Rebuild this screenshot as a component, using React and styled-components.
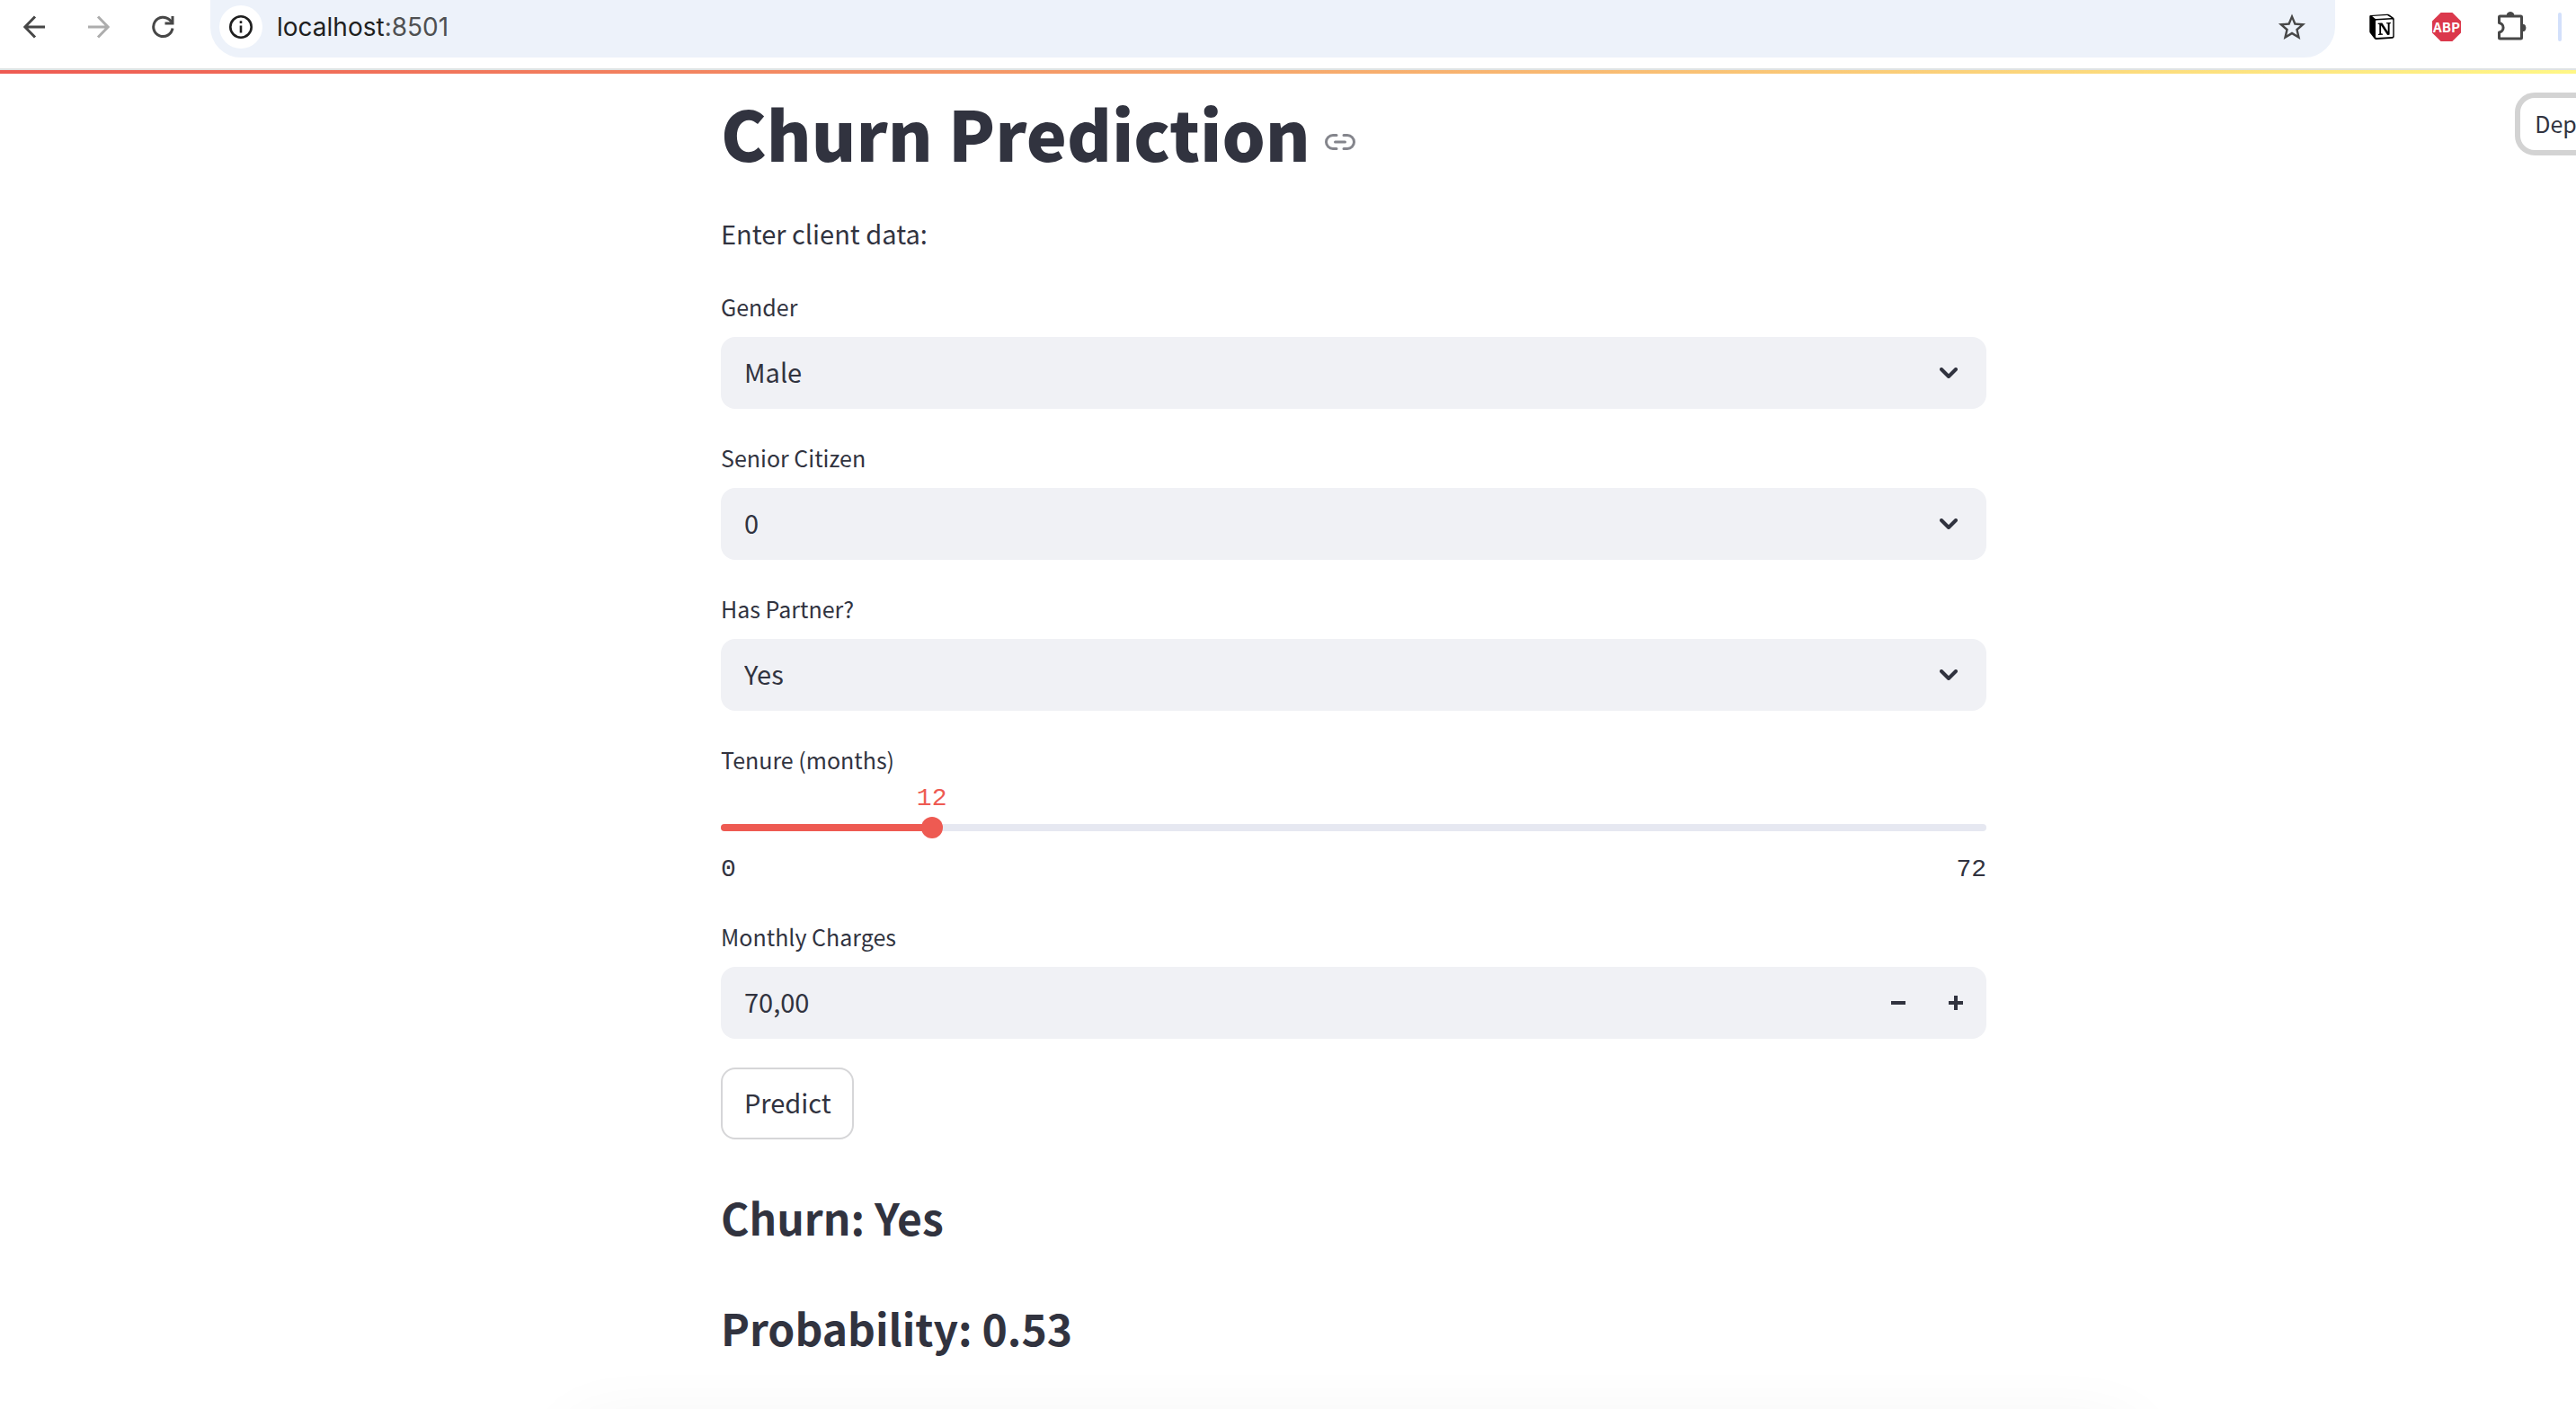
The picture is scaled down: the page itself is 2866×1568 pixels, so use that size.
import React, { useState } from "react";
import styled, { createGlobalStyle } from "styled-components";

const sans = `"Noto Sans CJK SC", "Noto Sans", sans-serif`;
const mono = `"Liberation Mono", monospace`;
const ink = "#31333f";
const field = "#f0f1f5";
const accent = "#ee5a52";

const GlobalStyle = createGlobalStyle`
  *, *::before, *::after { box-sizing: border-box; }
  html, body, #root { height: 100%; }
  body { margin: 0; background: #fff; color: ${ink}; font-family: ${sans}; }
  button, input, select { font: inherit; color: inherit; margin: 0; }
`;

const Page = styled.div`
  position: relative;
  display: flex;
  flex-direction: column;
  min-height: 100%;
  overflow: hidden;
`;

const Toolbar = styled.div`
  display: flex;
  align-items: flex-start;
  height: 78px;
  padding-left: 14px;
  border-bottom: 2px solid #dfe2e2;
`;

const NavGroup = styled.nav`
  display: flex;
  gap: 24px;
  width: 220px;
  padding-top: 6px;
`;

const IconButton = styled.button`
  display: flex;
  align-items: center;
  justify-content: center;
  flex: none;
  width: 48px;
  height: 48px;
  padding: 0;
  border: 0;
  border-radius: 24px;
  background: ${(p) => p.$fill || "transparent"};
  color: ${(p) => p.$tone || "#474747"};
`;

const AddressBar = styled.div`
  display: flex;
  align-items: center;
  flex: 1;
  gap: 16px;
  height: 64px;
  padding: 0 24px 4px 10px;
  border-radius: 0 0 34px 34px;
  background: #edf2fa;
`;

const Address = styled.span`
  flex: 1;
  font: 28px/40px Inter, sans-serif;
  color: #1f1f1f;
`;

const Port = styled.span`
  color: #4f5052;
`;

const Extensions = styled.div`
  display: flex;
  align-items: center;
  gap: 24px;
  width: 268px;
  padding: 6px 0 0 28px;
`;

const Divider = styled.span`
  width: 4px;
  height: 32px;
  margin-left: 4px;
  border-radius: 2px;
  background: #d3e0fb;
`;

const Decoration = styled.div`
  height: 4px;
  background: linear-gradient(90deg, #ee5a52, #fff786);
`;

const DeployButton = styled.button`
  position: absolute;
  top: 103px;
  right: -58px;
  height: 70px;
  padding: 0 16px 2px;
  border: 6px solid #d3d3d3;
  border-radius: 22px;
  background: #fff;
  font-size: 25px;
  line-height: 36px;
`;

const Main = styled.main`
  display: flex;
  justify-content: center;
  padding-left: 146px;
`;

const Column = styled.div`
  display: flex;
  flex-direction: column;
  align-items: flex-start;
  gap: 32px;
  width: 100%;
  max-width: 1408px;
  padding-top: 12px;
`;

const TitleRow = styled.div`
  display: flex;
  align-items: center;
  gap: 16px;
`;

const Title = styled.h1`
  margin: 0;
  font-size: 76px;
  line-height: 106px;
  font-weight: 900;
`;

const Anchor = styled.a`
  display: flex;
  padding-top: 22px;
  color: #84858c;
`;

const Lead = styled.p`
  margin: 4px 0 0;
  padding-bottom: 5px;
  font-size: 29px;
  line-height: 46px;
`;

const Field = styled.div`
  display: flex;
  flex-direction: column;
  width: 100%;
`;

const Label = styled.label`
  margin-bottom: 8px;
  padding-bottom: 4px;
  font-size: 25px;
  line-height: 44px;
`;

const Stack = styled.div`
  display: grid;
  align-items: center;

  & > * { grid-area: 1 / 1; }
`;

const Control = styled(Stack)`
  height: 80px;
  border-radius: 16px;
  background: ${field};
`;

const Select = styled.select`
  appearance: none;
  width: 100%;
  height: 100%;
  padding: 0 80px 4px 26px;
  border: 0;
  background: transparent;
  font-size: 29px;
`;

const SelectIcon = styled.span`
  display: flex;
  justify-self: end;
  padding-right: 32px;
  pointer-events: none;
`;

const SliderField = styled(Field)`
  height: 165px;
`;

const SliderLabel = styled(Label)`
  margin-bottom: 0;
`;

const SliderValue = styled.output`
  display: flex;
  justify-content: center;
  width: 0;
  margin-bottom: 2px;
  color: ${accent};
  font: 28px/36px ${mono};
`;

const Rail = styled.div`
  height: 8px;
  border-radius: 4px;
  background: #e6e8f1;
  overflow: hidden;
`;

const RailFill = styled.div`
  height: 8px;
  background: ${accent};
`;

const Range = styled.input`
  appearance: none;
  width: calc(100% + 24px);
  height: 24px;
  margin: 0 -12px;
  background: transparent;

  &::-webkit-slider-thumb {
    appearance: none;
    width: 24px;
    height: 24px;
    border-radius: 12px;
    background: ${accent};
  }
`;

const Ticks = styled.div`
  display: flex;
  justify-content: space-between;
  padding-top: 17px;
  font: 28px/36px ${mono};
`;

const NumberBox = styled.div`
  display: flex;
  align-items: center;
  height: 80px;
  border-radius: 16px;
  background: ${field};
  overflow: hidden;
`;

const NumberInput = styled.input`
  flex: 1;
  height: 80px;
  padding: 0 26px 4px;
  border: 0;
  background: transparent;
  font-size: 29px;
`;

const Step = styled.button`
  display: flex;
  align-items: center;
  justify-content: center;
  width: 64px;
  height: 80px;
  padding: 0;
  border: 0;
  background: transparent;

  &:last-child { margin-right: 2px; }
`;

const PredictButton = styled.button`
  height: 80px;
  padding: 0 23px 4px 24px;
  border: 2px solid #d6d6d8;
  border-radius: 16px;
  background: #fff;
  font-size: 29px;
`;

const Result = styled.h3`
  margin: 0;
  padding: 25px 0 7px;
  font-size: 48px;
  line-height: 59px;
  font-weight: 700;
`;

const BottomShade = styled.div`
  position: absolute;
  left: 640px;
  right: 496px;
  bottom: -220px;
  height: 200px;
  box-shadow: 0 0 80px rgba(0, 0, 0, 0.06);
`;

const iconProps = { fill: "none", stroke: "currentColor", "aria-hidden": true };

function BackIcon() {
  return (
    <svg width="24" height="26" viewBox="0 0 24 26" strokeWidth="3" {...iconProps}>
      <path d="M24 13H2M13 1.500 1.800 13 13 24.500" />
    </svg>
  );
}

function ForwardIcon() {
  return (
    <svg width="24" height="26" viewBox="0 0 24 26" strokeWidth="3" {...iconProps}>
      <path d="M0 13h22M11 1.500 22.200 13 11 24.500" />
    </svg>
  );
}

function ReloadIcon() {
  return (
    <svg width="26" height="26" viewBox="0 0 26 26" strokeWidth="3" {...iconProps}>
      <path d="M23 14.500A10.700 10.700 0 1 1 20 5.300L23 8" />
      <path d="M23 1v8h-8.500" />
    </svg>
  );
}

function InfoIcon() {
  return (
    <svg width="28" height="28" viewBox="0 0 28 28" strokeWidth="2.600" {...iconProps}>
      <circle cx="14" cy="14" r="11.700" />
      <path d="M14 12.500v8M14 7.300v2.800" />
    </svg>
  );
}

function StarIcon() {
  return (
    <svg width="32" height="32" viewBox="0 0 24 24" fill="currentColor" aria-hidden="true">
      <path d="m22 9.240-7.190-.62L12 2 9.190 8.630 2 9.240l5.460 4.730L5.820 21 12 17.270 18.180 21l-1.630-7.030zM12 15.400l-3.760 2.270 1-4.280-3.320-2.880 4.380-.38L12 6.100l1.710 4.040 4.380.38-3.320 2.880 1 4.280z" transform="matrix(1.13 0 0 1.13 -1.56 -1.2)" />
    </svg>
  );
}

function NotionIcon() {
  return (
    <svg width="28" height="30" viewBox="0 0 28 30" aria-hidden="true">
      <path d="M1.500 2 20 .700q1.500-.1 2.500.7l4.500 3.300q.7.500.7 1.500v19.600q0 1.700-1.700 1.900L8 29q-1.500.1-2.300-1L.9 21.800q-.6-.8-.6-1.900V3.300Q.3 2.100 1.500 2Z" fill="#000" />
      <path d="M3.200 2.900 20 1.900l4.700 3.200-16.800 1q-1 0-1.800-.6Z" fill="#fff" />
      <path d="M7 8.600q0-1 1-1.100l17.300-1q1-.1 1 .9v17.500q0 1-1 1.100L8.200 27Q7 27 7 26Z" fill="#fff" />
      <path d="M9.600 10.700l4.700-.3 6.400 9.800v-8.600l-1.700-.3v-1.100l4.900-.3v1.100l-1.300.5v12.100q-1.300.7-2.600.2L13.100 13.200v9l2 .5v1l-5.100.3v-1.100l1.300-.5V12.200l-1.700-.4Z" fill="#000" />
    </svg>
  );
}

const AbpBadge = styled.span`
  display: flex;
  align-items: center;
  justify-content: center;
  width: 32px;
  height: 32px;
  background: #db384c;
  color: #fff;
  clip-path: polygon(30% 0, 70% 0, 100% 30%, 100% 70%, 70% 100%, 30% 100%, 0 70%, 0 30%);
  font: 700 15px/16px ${sans};
`;

function PuzzleIcon() {
  return (
    <svg width="34" height="34" viewBox="0 0 34 34" strokeWidth="3" strokeLinejoin="round" {...iconProps}>
      <path d="M4.500 5h23q1 0 1 1v23q0 1-1 1h-23q-1 0-1-1v-6a5.300 5.300 0 0 0 0-10.500V6q0-1 1-1Z" />
      <path d="M12 4.500a4 4 0 0 1 8 0ZM29 14a4 4 0 0 1 0 8Z" fill="currentColor" strokeWidth="1" />
    </svg>
  );
}

function LinkIcon() {
  return (
    <svg width="34" height="18" viewBox="0 0 34 18" strokeWidth="3" strokeLinecap="round" {...iconProps}>
      <path d="M13 1.500H9a7.500 7.500 0 0 0 0 15h4M21 1.500h4a7.500 7.500 0 0 1 0 15h-4M11.500 9h11" />
    </svg>
  );
}

function ChevronIcon() {
  return (
    <svg width="20" height="12" viewBox="0 0 20 12" strokeWidth="4" strokeLinecap="round" strokeLinejoin="round" {...iconProps}>
      <path d="M2 2l8 8 8-8" />
    </svg>
  );
}

function StepIcon({ plus }) {
  return (
    <svg width="16" height="16" viewBox="0 0 16 16" strokeWidth="4" {...iconProps}>
      <path d={plus ? "M0 8h16M8 0v16" : "M0 8h16"} />
    </svg>
  );
}

function SelectField({ id, label, options }) {
  return (
    <Field>
      <Label htmlFor={id}>{label}</Label>
      <Control>
        <Select id={id} defaultValue={options[0]}>
          {options.map((option) => (
            <option key={option}>{option}</option>
          ))}
        </Select>
        <SelectIcon>
          <ChevronIcon />
        </SelectIcon>
      </Control>
    </Field>
  );
}

function TenureSlider() {
  const max = 72;
  const [months, setMonths] = useState(12);
  const percent = (months / max) * 100;
  return (
    <SliderField>
      <SliderLabel htmlFor="tenure">Tenure (months)</SliderLabel>
      <SliderValue htmlFor="tenure" style={{ marginLeft: `${percent}%` }}>
        {months}
      </SliderValue>
      <Stack>
        <Rail>
          <RailFill style={{ width: `${percent}%` }} />
        </Rail>
        <Range
          id="tenure"
          type="range"
          min="0"
          max={max}
          value={months}
          onChange={(e) => setMonths(Number(e.target.value))}
        />
      </Stack>
      <Ticks>
        <span>0</span>
        <span>{max}</span>
      </Ticks>
    </SliderField>
  );
}

function ChargesField() {
  const [charges, setCharges] = useState("70,00");
  const step = (delta) => {
    const next = (parseFloat(charges.replace(",", ".")) || 0) + delta;
    setCharges(next.toFixed(2).replace(".", ","));
  };
  return (
    <Field>
      <Label htmlFor="charges">Monthly Charges</Label>
      <NumberBox>
        <NumberInput
          id="charges"
          inputMode="decimal"
          value={charges}
          onChange={(e) => setCharges(e.target.value)}
        />
        <Step aria-label="Decrease" onClick={() => step(-1)}>
          <StepIcon />
        </Step>
        <Step aria-label="Increase" onClick={() => step(1)}>
          <StepIcon plus />
        </Step>
      </NumberBox>
    </Field>
  );
}

export default function App() {
  return (
    <Page>
      <GlobalStyle />
      <Toolbar>
        <NavGroup>
          <IconButton aria-label="Back">
            <BackIcon />
          </IconButton>
          <IconButton aria-label="Forward" $tone="#adadad">
            <ForwardIcon />
          </IconButton>
          <IconButton aria-label="Reload">
            <ReloadIcon />
          </IconButton>
        </NavGroup>
        <AddressBar>
          <IconButton aria-label="Site information" $fill="#fff" $tone="#1f1f1f">
            <InfoIcon />
          </IconButton>
          <Address>
            localhost<Port>:8501</Port>
          </Address>
          <IconButton aria-label="Bookmark">
            <StarIcon />
          </IconButton>
        </AddressBar>
        <Extensions>
          <IconButton aria-label="Notion">
            <NotionIcon />
          </IconButton>
          <IconButton aria-label="Adblock Plus">
            <AbpBadge>ABP</AbpBadge>
          </IconButton>
          <IconButton aria-label="Extensions">
            <PuzzleIcon />
          </IconButton>
          <Divider />
        </Extensions>
      </Toolbar>
      <Decoration />
      <Main>
        <Column>
          <TitleRow>
            <Title id="churn-prediction">Churn Prediction</Title>
            <Anchor href="#churn-prediction" aria-label="Link to heading">
              <LinkIcon />
            </Anchor>
          </TitleRow>
          <Lead>Enter client data:</Lead>
          <SelectField id="gender" label="Gender" options={["Male", "Female"]} />
          <SelectField id="senior" label="Senior Citizen" options={["0", "1"]} />
          <SelectField id="partner" label="Has Partner?" options={["Yes", "No"]} />
          <TenureSlider />
          <ChargesField />
          <PredictButton>Predict</PredictButton>
          <Result>Churn: Yes</Result>
          <Result>Probability: 0.53</Result>
        </Column>
      </Main>
      <DeployButton>Deploy</DeployButton>
      <BottomShade />
    </Page>
  );
}
